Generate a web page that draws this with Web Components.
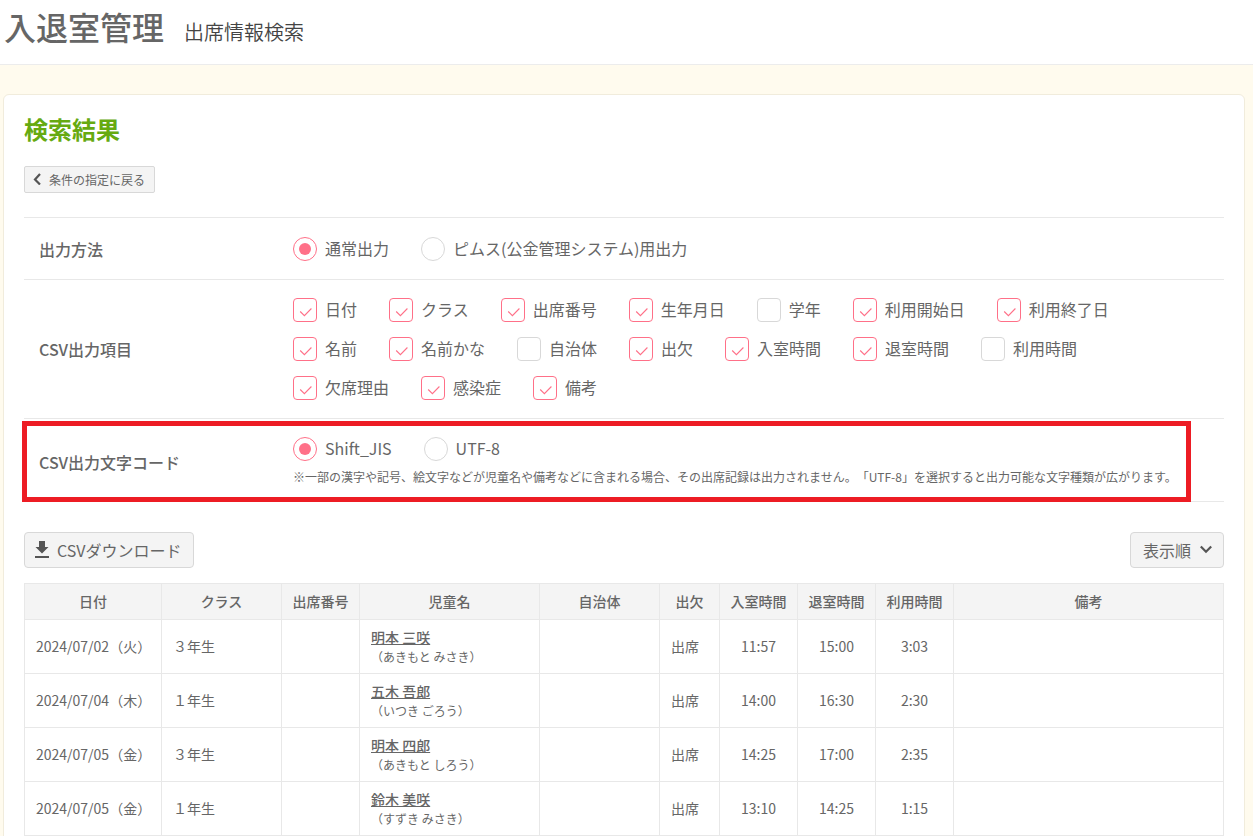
<!DOCTYPE html>
<html lang="ja">
<head>
<meta charset="utf-8">
<meta name="viewport" content="width=device-width, initial-scale=1">
<title>出席情報検索 | 入退室管理</title>
<style>
  body {
    margin: 0;
    background: #fffbee;
    color: #666;
    font: 16px/24px "Noto Sans CJK JP", "Noto Sans", sans-serif;
    text-spacing-trim: space-all;
  }
</style>
</head>
<body>
<page-header>
  <span slot="system">入退室管理</span>
  <span slot="screen">出席情報検索</span>
</page-header>
<result-panel heading="検索結果">
  <action-button size="small" icon="back">条件の指定に戻る</action-button>
  <setting-list>
    <setting-row label="出力方法">
      <choice-group kind="radio" name="method" label="出力方法" items="*通常出力|ピムス(公金管理システム)用出力"></choice-group>
    </setting-row>
    <setting-row label="CSV出力項目">
      <choice-group kind="checkbox" name="fields" label="CSV出力項目" items="*日付|*クラス|*出席番号|*生年月日|学年|*利用開始日|*利用終了日|*名前|*名前かな|自治体|*出欠|*入室時間|*退室時間|利用時間|*欠席理由|*感染症|*備考"></choice-group>
    </setting-row>
    <setting-row label="CSV出力文字コード" highlight>
      <choice-group kind="radio" name="encoding" label="CSV出力文字コード" items="*Shift_JIS|UTF-8"></choice-group>
      <span slot="note">※一部の漢字や記号、絵文字などが児童名や備考などに含まれる場合、その出席記録は出力されません。「UTF-8」を選択すると出力可能な文字種類が広がります。</span>
    </setting-row>
  </setting-list>
  <tool-bar>
    <action-button icon="download">CSVダウンロード</action-button>
    <action-button icon="down" popup>表示順</action-button>
  </tool-bar>
  <attendance-table></attendance-table>
</result-panel>

<script>
class BaseElement extends HTMLElement {
  render(html) {
    this.attachShadow({ mode: "open" }).innerHTML = html;
  }
}

customElements.define("page-header", class extends BaseElement {
  connectedCallback() {
    this.render(`
      <style>
        :host { display: block; background: #fff; border-bottom: 1px solid #ececec; }
        header { display: flex; align-items: baseline; gap: 20px; padding: 0 4px 12px; }
        h1, p { margin: 0; }
        h1 { font-size: 32px; line-height: 52px; font-weight: 500; }
        p { font-size: 20px; line-height: 32px; font-weight: 350; color: #444; }
      </style>
      <header><h1><slot name="system"></slot></h1><p><slot name="screen"></slot></p></header>`);
  }
});

customElements.define("result-panel", class extends BaseElement {
  connectedCallback() {
    this.render(`
      <style>
        :host { display: block; padding: 29px 8px 24px 3px; }
        section { background: #fff; border: 1px solid #f1ecdc; border-radius: 6px; padding: 18px 20px; }
        h2 { margin: 0 0 22px; color: #6a1; font-size: 24px; line-height: 31px; font-weight: 700; }
      </style>
      <section aria-labelledby="t"><h2 id="t">${this.getAttribute("heading")}</h2><slot></slot></section>`);
  }
});

const ICONS = {
  back: `<svg width="10" height="12" viewBox="0 0 10 12"><path d="M7 1 2 6.500l5 5" fill="none" stroke="#555" stroke-width="2.2"/></svg>`,
  down: `<svg width="12" height="12" viewBox="0 0 12 12"><path d="M.8 3.500 6 8.700l5.200-5.200" fill="none" stroke="#555" stroke-width="2.2"/></svg>`,
  download: `<svg width="14" height="17" viewBox="0 0 14 17"><path d="M4 0h6v6h3.500L7 12.500.5 6H4zM0 15h14v2H0z" fill="#555"/></svg>`
};

customElements.define("action-button", class extends BaseElement {
  connectedCallback() {
    const icon = ICONS[this.getAttribute("icon")];
    const popup = this.hasAttribute("popup");
    this.render(`
      <style>
        :host { display: block; width: fit-content; }
        button { display: flex; align-items: center; gap: 8px; height: 36px; padding: 0 11px 0 10px;
          border: 1px solid #d8d8d8; border-radius: 4px; background: #f4f4f4; color: #666;
          font: inherit; cursor: pointer; }
        :host([popup]) button { padding: 0 11px 0 12px; gap: 9px; }
        :host([size=small]) button { height: 27px; padding: 0 9px 0 8px; gap: 6px; font-size: 12px; line-height: 18px; border-radius: 2px; }
        svg { display: block; margin-bottom: 2px; }
      </style>
      <button type="button"${popup ? ' aria-haspopup="menu"' : ""}>${popup ? "" : icon}<span><slot></slot></span>${popup ? icon : ""}</button>`);
  }
});

customElements.define("setting-list", class extends BaseElement {
  connectedCallback() {
    this.render(`
      <style>
        :host { display: block; margin: 24px 0 30px; border-bottom: 1px solid #e8e8e8; }
      </style><slot></slot>`);
  }
});

customElements.define("setting-row", class extends BaseElement {
  connectedCallback() {
    this.render(`
      <style>
        :host { display: grid; grid-template-columns: 254px 1fr; align-items: center;
          position: relative; padding: 18px 22px 18px 15px; border-top: 1px solid #e8e8e8; }
        :host(:first-of-type) { padding-top: 19px; }
        h3 { margin: 0; font-size: 16px; line-height: 24px; font-weight: 500; }
        .note { margin: 7px 0 0; font-size: 12px; line-height: 18px; }
        :host([highlight]) { padding-bottom: 15px; }
        .frame { display: none; position: absolute; top: 2px; right: 33px; bottom: -1px; left: -2px;
          border: 5px solid #ed1c24; pointer-events: none; }
        :host([highlight]) .frame { display: block; }
      </style>
      <h3>${this.getAttribute("label")}</h3>
      <div><slot></slot>${this.querySelector("[slot=note]") ? '<p class="note"><slot name="note"></slot></p>' : ""}</div>
      <div class="frame"></div>`);
  }
});

customElements.define("choice-group", class extends BaseElement {
  connectedCallback() {
    const kind = this.getAttribute("kind");
    const name = this.getAttribute("name");
    const mark = kind === "radio"
      ? `<svg viewBox="0 0 24 24"><circle cx="12" cy="12" r="6" fill="#ff7088"/></svg>`
      : `<svg viewBox="0 0 24 24"><path d="M7.200 13.500l4.200 4.200 7-7.200" fill="none" stroke="#ff7088" stroke-width="1.100"/></svg>`;
    const items = this.getAttribute("items").split("|").map((item, i) => {
      const on = item.startsWith("*");
      const text = on ? item.slice(1) : item;
      return `<label for="c${i}"><span class="box"><input id="c${i}" type="${kind}" name="${name}" value="${text}"${on ? " checked" : ""}>${mark}</span><span>${text}</span></label>`;
    }).join("");
    this.render(`
      <style>
        :host { display: block; }
        .group { display: flex; flex-wrap: wrap; gap: 15px 32px; line-height: 22px; }
        label { display: flex; gap: 8px; cursor: pointer; white-space: nowrap; }
        .box { display: grid; width: 24px; height: 24px; }
        input, svg { grid-area: 1 / 1; width: 24px; height: 24px; }
        input { appearance: none; box-sizing: border-box; margin: 0; border: 1px solid #d8d8d8; border-radius: 4px; background: #fff; }
        input[type=radio] { border-radius: 50%; }
        input:checked { border-color: #ff7088; }
        svg { visibility: hidden; pointer-events: none; }
        input:checked + svg { visibility: visible; }
      </style>
      <div class="group" role="${kind === "radio" ? "radiogroup" : "group"}" aria-label="${this.getAttribute("label")}">${items}</div>`);
  }
});

customElements.define("tool-bar", class extends BaseElement {
  connectedCallback() {
    this.render(`
      <style>
        :host { display: flex; justify-content: space-between; margin-bottom: 15px; }
      </style><slot></slot>`);
  }
});

const COLUMNS = [["日付", 137], ["クラス", 120], ["出席番号", 78], ["児童名", 180], ["自治体", 120],
  ["出欠", 60], ["入室時間", 78], ["退室時間", 78], ["利用時間", 78], ["備考", 0]];
const RECORDS = [
  ["2024/07/02（火）", "３年生", "明本 三咲", "（あきもと みさき）", "11:57", "15:00", "3:03"],
  ["2024/07/04（木）", "１年生", "五木 吾郎", "（いつき ごろう）", "14:00", "16:30", "2:30"],
  ["2024/07/05（金）", "３年生", "明本 四郎", "（あきもと しろう）", "14:25", "17:00", "2:35"],
  ["2024/07/05（金）", "１年生", "鈴木 美咲", "（すずき みさき）", "13:10", "14:25", "1:15"]
];

customElements.define("attendance-table", class extends BaseElement {
  connectedCallback() {
    const cols = COLUMNS.map(([, w]) => w ? `<col style="width:${w}px">` : "<col>").join("");
    const head = COLUMNS.map(([t]) => `<th scope="col">${t}</th>`).join("");
    const rows = RECORDS.map(([date, grade, name, kana, enter, leave, used]) => `<tr>
      <td>${date}</td><td>${grade}</td><td></td>
      <td class="name"><a href="#">${name}</a><small>${kana}</small></td>
      <td></td><td>出席</td><td class="time">${enter}</td><td class="time">${leave}</td><td class="time">${used}</td><td></td></tr>`).join("");
    this.render(`
      <style>
        :host { display: block; }
        table { width: 100%; table-layout: fixed; border-collapse: collapse; font-size: 14px; line-height: 20px; }
        th, td { border: 1px solid #e8e8e8; white-space: nowrap; }
        th { height: 33px; padding: 0 0 2px; background: #f4f4f4; font-weight: 500; }
        td { height: 51px; padding: 0 10px 2px 11px; text-align: left; }
        .time { padding: 0 0 2px; text-align: center; }
        .name { height: 53px; padding-bottom: 0; }
        a { display: block; width: fit-content; color: inherit; font-weight: 500; text-decoration: underline; }
        small { display: block; margin-top: 1px; font-size: 12px; line-height: 18px; }
      </style>
      <table><colgroup>${cols}</colgroup><thead><tr>${head}</tr></thead><tbody>${rows}</tbody></table>`);
  }
});
</script>
</body>
</html>
